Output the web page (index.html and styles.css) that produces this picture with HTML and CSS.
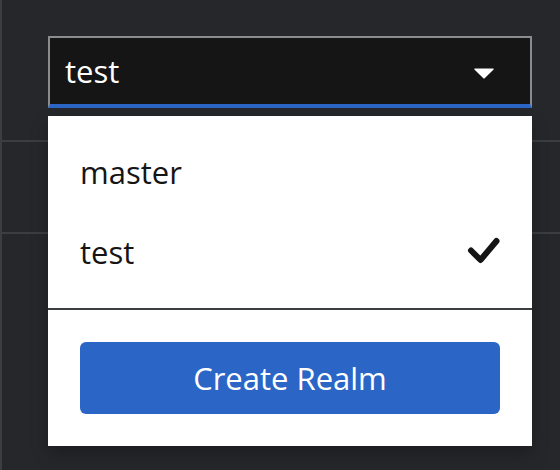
FILE: index.html
```html
<!DOCTYPE html>
<html lang="en">
<head>
<meta charset="utf-8">
<title>Realm selector</title>
<link rel="stylesheet" href="styles.css">
</head>
<body>
<div class="page">
  <div class="bg-row bg-row-first"></div>
  <div class="bg-row bg-row-second"></div>

  <div class="realm-select">
    <button class="toggle" type="button">
      <span class="toggle-text">test</span>
      <svg class="caret" viewBox="0 0 20 11" width="20" height="11" aria-hidden="true">
        <path d="M0.8 0.5 H19.2 a0.6 0.6 0 0 1 0.4 1 L10.4 10.4 a0.6 0.6 0 0 1 -0.8 0 L0.4 1.5 a0.6 0.6 0 0 1 0.4 -1 Z" fill="#ffffff"/>
      </svg>
    </button>

    <div class="menu">
      <ul class="menu-list">
        <li class="menu-item">master</li>
        <li class="menu-item">
          <span>test</span>
          <svg class="check" viewBox="0 0 34 28" width="34" height="28" aria-hidden="true">
            <polyline points="4,14.5 13.5,24 29.5,5" fill="none" stroke="#151515" stroke-width="6" stroke-linecap="round" stroke-linejoin="round"/>
          </svg>
        </li>
      </ul>
      <div class="menu-footer">
        <button class="create-btn" type="button">Create Realm</button>
      </div>
    </div>
  </div>
</div>
</body>
</html>
```

FILE: styles.css
```css
* {
  box-sizing: border-box;
}

html, body {
  margin: 0;
  padding: 0;
}

body {
  background: #25272b;
  font-family: "Open Sans", "Noto Sans", sans-serif;
  width: 560px;
  height: 470px;
  overflow: hidden;
}

.page {
  position: relative;
  height: 470px;
  border-left: 2px solid #3a3d41;
}

.bg-row {
  border-bottom: 2px solid #3a3d41;
}

.bg-row-first {
  height: 142px;
}

.bg-row-second {
  height: 92px;
}

.realm-select {
  position: absolute;
  top: 36px;
  left: 46px;
  width: 484px;
}

.toggle {
  display: flex;
  align-items: center;
  justify-content: space-between;
  width: 100%;
  height: 72px;
  margin: 0;
  padding: 0 36px 0 15px;
  background: #151515;
  border: 2px solid #8a8d90;
  border-bottom: 4px solid #2b65c6;
  color: #ffffff;
  font-family: inherit;
  font-size: 31px;
  line-height: 48px;
  text-align: left;
}

.caret {
  display: block;
  margin-top: 5px;
}

.menu {
  margin-top: 8px;
  background: #ffffff;
  box-shadow: 0 8px 16px rgba(0, 0, 0, 0.25);
}

.menu-list {
  list-style: none;
  margin: 0;
  padding: 16px 0;
  border-bottom: 2px solid #3c3f42;
}

.menu-item {
  display: flex;
  align-items: center;
  justify-content: space-between;
  padding: 16px 32px;
  font-size: 31px;
  line-height: 48px;
  color: #151515;
}

.check {
  display: block;
  margin-right: -1px;
  margin-top: -4px;
}

.menu-footer {
  padding: 32px;
}

.create-btn {
  display: block;
  width: 100%;
  height: 72px;
  margin: 0;
  padding: 0 32px;
  border: none;
  border-radius: 6px;
  background: #2b65c6;
  color: #ffffff;
  font-family: inherit;
  font-size: 31px;
  line-height: 48px;
  text-align: center;
}
```
